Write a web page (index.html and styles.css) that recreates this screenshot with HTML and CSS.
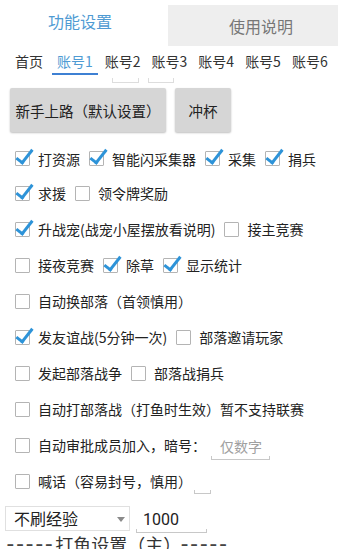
FILE: index.html
```html
<!DOCTYPE html>
<html lang="zh">
<head>
<meta charset="utf-8">
<link rel="stylesheet" href="styles.css">
</head>
<body>
<div class="tabs">
  <div class="tab active">功能设置</div>
  <div class="tab other">使用说明</div>
</div>
<div class="accts">
  <span class="acct home">首页</span>
  <span class="acct sel">账号1</span>
  <span class="acct">账号2</span>
  <span class="acct">账号3</span>
  <span class="acct">账号4</span>
  <span class="acct">账号5</span>
  <span class="acct">账号6</span>
</div>
<div class="frags"><span class="frag f1"></span><span class="frag f2"></span></div>
<div class="btns">
  <div class="btn wide">新手上路（默认设置）</div>
  <div class="btn">冲杯</div>
</div>

<div class="row first">
  <span class="cb on"></span><span class="lbl">打资源</span>
  <span class="cb on"></span><span class="lbl">智能闪采集器</span>
  <span class="cb on"></span><span class="lbl">采集</span>
  <span class="cb on"></span><span class="lbl">捐兵</span>
</div>
<div class="row">
  <span class="cb on"></span><span class="lbl">求援</span>
  <span class="cb"></span><span class="lbl">领令牌奖励</span>
</div>
<div class="row">
  <span class="cb on"></span><span class="lbl">升战宠(战宠小屋摆放看说明)</span>
  <span class="cb"></span><span class="lbl">接主竞赛</span>
</div>
<div class="row">
  <span class="cb"></span><span class="lbl">接夜竞赛</span>
  <span class="cb on"></span><span class="lbl">除草</span>
  <span class="cb on"></span><span class="lbl">显示统计</span>
</div>
<div class="row">
  <span class="cb"></span><span class="lbl">自动换部落（首领慎用）</span>
</div>
<div class="row">
  <span class="cb on"></span><span class="lbl">发友谊战(5分钟一次)</span>
  <span class="cb"></span><span class="lbl">部落邀请玩家</span>
</div>
<div class="row">
  <span class="cb"></span><span class="lbl">发起部落战争</span>
  <span class="cb"></span><span class="lbl">部落战捐兵</span>
</div>
<div class="row">
  <span class="cb"></span><span class="lbl">自动打部落战（打鱼时生效）暂不支持联赛</span>
</div>
<div class="row">
  <span class="cb"></span><span class="lbl">自动审批成员加入，暗号：</span>
  <span class="edit code">仅数字</span>
</div>
<div class="row">
  <span class="cb"></span><span class="lbl">喊话（容易封号，慎用）</span>
  <span class="edit tiny"></span>
</div>
<div class="selrow">
  <div class="select">不刷经验<span class="arrow"></span></div>
  <span class="edit num">1000</span>
</div>
<div class="section"><span class="dash">-----</span>打鱼设置（主）<span class="dash">-----</span></div>
</body>
</html>
```
FILE: styles.css
```css
html, body {
  margin: 0;
  padding: 0;
  background: #ffffff;
}
body {
  width: 338px;
  height: 549px;
  overflow: hidden;
  font-family: "Noto Sans CJK SC", "Noto Sans", "Liberation Sans", sans-serif;
  color: #222222;
}
.tabs {
  display: flex;
  height: 50px;
}
.tab {
  font-size: 16px;
  display: flex;
  align-items: center;
  justify-content: center;
}
.tab.active {
  width: 160px;
  height: 42px;
  color: #4f9bd3;
}
.tab.other {
  flex: 1;
  margin-top: 5px;
  margin-left: 8px;
  height: 41px;
  background: #eeeeee;
  color: #777777;
  padding-left: 16px;
}
.accts {
  display: flex;
  height: 26px;
  padding-left: 15px;
  font-size: 14px;
  white-space: nowrap;
}
.acct {
  flex: none;
  height: 23px;
  line-height: 23px;
  margin-right: 11px;
  border-bottom: 2px solid transparent;
  color: #333333;
}
.acct.home {
  margin-right: 9px;
}
.acct.sel {
  color: #4f9bd3;
  padding: 0 5px;
  margin-right: 7px;
  border-bottom-color: #3e80d3;
}
.frags {
  display: flex;
  height: 12px;
  padding-left: 112px;
}
.frag {
  height: 4px;
  margin-top: 2px;
  border: 1px solid #dddddd;
  border-top: none;
}
.f1 { width: 25px; }
.f2 { width: 24px; margin-left: 9px; }
.btns {
  display: flex;
  gap: 9px;
  padding-left: 10px;
  height: 49px;
}
.btn {
  height: 44px;
  background: #d6d6d6;
  box-shadow: 0 1px 2px rgba(0,0,0,0.25);
  border-radius: 2px;
  font-size: 14.5px;
  display: flex;
  align-items: center;
  justify-content: center;
  color: #222222;
}
.btn.wide { width: 156px; }
.btn:not(.wide) { width: 56px; }
.row {
  display: flex;
  align-items: center;
  height: 36px;
  padding-left: 15px;
  font-size: 14px;
}
.row.first {
  height: 33px;
  margin-top: 5px;
}
.cb {
  width: 15px;
  height: 15px;
  box-sizing: border-box;
  border: 1.5px solid #b4b4b4;
  border-radius: 1px;
  margin-right: 8px;
  position: relative;
  flex: none;
}
.cb.on::after {
  content: "";
  position: absolute;
  left: 4px;
  top: -6px;
  width: 6px;
  height: 15px;
  border-right: 3.5px solid #2d93d8;
  border-bottom: 3.5px solid #2d93d8;
  transform: rotate(38deg);
  transform-origin: 50% 50%;
}
.lbl {
  margin-right: 9px;
  white-space: nowrap;
}
.edit {
  position: relative;
  border-bottom: 1px solid #c8c8c8;
}
.edit::before, .edit::after {
  content: "";
  position: absolute;
  bottom: 0;
  width: 1px;
  height: 3px;
  background: #c8c8c8;
}
.edit::before { left: 0; }
.edit::after { right: 0; }
.edit.code {
  width: 59px;
  margin-left: -4px;
  padding-left: 9px;
  box-sizing: border-box;
  color: #a0a0a0;
  line-height: 26px;
  margin-top: 2px;
}
.edit.tiny {
  width: 17px;
  height: 1px;
  align-self: flex-end;
  margin-bottom: 5px;
  margin-left: -7px;
}
.selrow {
  display: flex;
  align-items: flex-end;
  height: 27px;
  padding-left: 5px;
  margin-top: 7px;
  font-size: 16px;
}
.select {
  width: 125px;
  height: 25px;
  box-sizing: border-box;
  border: 1px solid #e0e0e0;
  padding-left: 8px;
  line-height: 23px;
  position: relative;
  color: #222222;
  align-self: flex-start;
}
.arrow {
  position: absolute;
  right: 4px;
  top: 10px;
  width: 0;
  height: 0;
  border-left: 4px solid transparent;
  border-right: 4px solid transparent;
  border-top: 5px solid #8a8a8a;
}
.edit.num {
  width: 71px;
  margin-left: 6px;
  padding-left: 7px;
  box-sizing: border-box;
  line-height: 24px;
  font-family: "Roboto", "Noto Sans", sans-serif;
}
.section {
  padding-left: 7px;
  font-size: 18px;
  line-height: 22px;
  white-space: nowrap;
  color: #333333;
}
.dash {
  font-size: 24px;
  letter-spacing: 3px;
  font-family: "Roboto", sans-serif;
  color: #444444;
}
```
